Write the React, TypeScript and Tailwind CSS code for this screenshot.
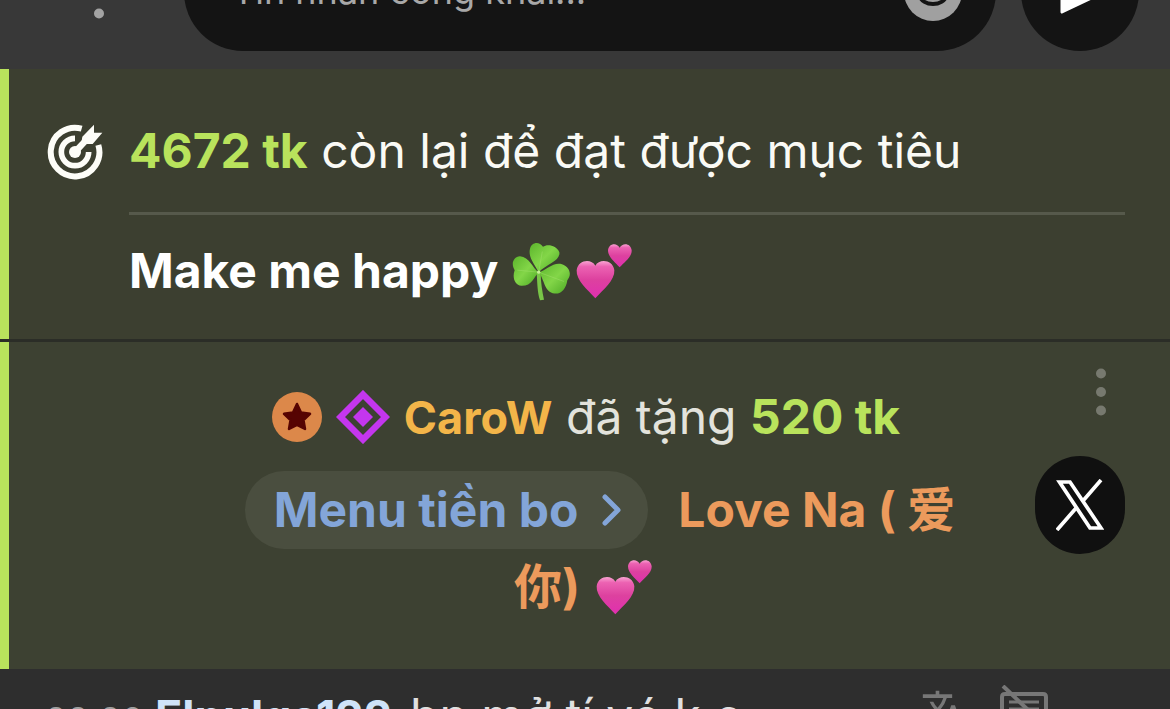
import React from "react";
import { MdTranslate } from "react-icons/md";

const TargetIcon = () => (
  <svg viewBox="0 0 168 168" className="size-14 shrink-0" fill="none" aria-hidden="true">
    <path d="M154 63A73 73 0 1 1 104 14" stroke="#fdfdf8" strokeWidth="18" />
    <path d="M125 84A41 41 0 1 1 84 43" stroke="#fdfdf8" strokeWidth="17" />
    <circle cx="84" cy="84" r="18" fill="#fdfdf8" />
    <path d="M84 84L116 50" stroke="#fdfdf8" strokeWidth="19" />
    <path d="M141 2V26H166L137 60H115L104 50L106 38Z" fill="#fdfdf8" />
  </svg>
);

const CloverIcon = () => (
  <svg viewBox="0 0 174 176" className="h-[59px] w-[58px] shrink-0" role="img" aria-label="clover">
    <defs>
      <linearGradient id="leaf" x1="0" y1="0" x2="1" y2="1">
        <stop offset="0" stopColor="#5cb52c" />
        <stop offset="0.5" stopColor="#83d648" />
        <stop offset="1" stopColor="#4aa823" />
      </linearGradient>
    </defs>
    <path d="M74 90C76 122 76 150 84 174L96 173C91 150 86 120 86 92Z" fill="#79c647" />
    <path d="M80 90C66 64 48 44 54 20C58 0 82 -4 93 14C106 4 134 10 142 30C146 56 104 66 80 90Z" fill="url(#leaf)" />
    <path d="M80 90C62 78 52 44 24 42C4 44 -4 64 8 84C0 106 8 128 28 131C60 132 66 104 80 90Z" fill="url(#leaf)" />
    <path d="M80 90C104 84 124 58 150 66C174 74 180 98 166 114C162 140 148 156 128 154C96 150 98 112 80 90Z" fill="url(#leaf)" />
    <path d="M80 90L91 28M80 90L16 84M80 90L156 118" stroke="#a9e572" strokeWidth="3" opacity="0.4" />
    <circle cx="80" cy="90" r="5" fill="#c5ee96" />
  </svg>
);

const HeartsIcon = ({ id }: { id: string }) => (
  <svg viewBox="0 0 168 168" className="size-14 shrink-0" role="img" aria-label="two hearts">
    <defs>
      <linearGradient id={id} x1="0" y1="0" x2="0" y2="1">
        <stop offset="0" stopColor="#f9a3d2" />
        <stop offset="0.15" stopColor="#ec62b2" />
        <stop offset="0.5" stopColor="#dd419f" />
        <stop offset="1" stopColor="#e02fb0" />
      </linearGradient>
    </defs>
    <path d="M58 68C46 46 6 50 2 82C0 112 34 140 58 166C82 140 117 112 115 82C111 50 70 46 58 68Z" fill={`url(#${id})`} />
    <path d="M131 14C123 -2 98 0 96 22C96 42 116 56 131 73C146 56 168 42 167 22C165 0 139 -2 131 14Z" fill={`url(#${id})`} />
  </svg>
);

const StarBadge = () => (
  <svg viewBox="0 0 50 50" className="size-[50px] shrink-0" role="img" aria-label="star">
    <circle cx="25" cy="25" r="25" fill="#dc884a" />
    <path d="M25 12L29 20.5L38 21.8L31.5 28.2L33 37L25 33L17 37L18.5 28.2L12 21.8L21 20.5Z" fill="#560402" stroke="#560402" strokeWidth="2.5" strokeLinejoin="round" />
  </svg>
);

const DiamondBadge = () => (
  <svg viewBox="0 0 54 54" className="size-[54px] shrink-0" role="img" aria-label="diamond">
    <path d="M27 4.5L49.5 27L27 49.5L4.5 27Z" fill="none" stroke="#c436ee" strokeWidth="6.5" />
    <path d="M27 17L37 27L27 37L17 27Z" fill="#c436ee" />
  </svg>
);

const Dots = ({ className }: { className: string }) => (
  <svg viewBox="0 0 48 48" className={className} fill="currentColor" aria-hidden="true">
    <circle cx="24" cy="5.5" r="5" />
    <circle cx="24" cy="24" r="5" />
    <circle cx="24" cy="42.5" r="5" />
  </svg>
);

const ChatBar = () => (
  <header className="flex h-[69px] shrink-0 items-end overflow-hidden bg-[#383838] pr-[31px] pb-[18px]">
    <div className="flex h-[118px] w-[184px] shrink-0 items-center pt-1.5 pl-[75px]">
      <button type="button" aria-label="Menu">
        <Dots className="size-12 text-[#a3a3a3]" />
      </button>
    </div>
    <div className="flex h-[118px] min-w-0 flex-1 items-center rounded-full bg-[#141414] pr-[34px] pl-12">
      <input
        type="text"
        aria-label="Tin nhắn công khai"
        placeholder="Tin nhắn công khai..."
        className="min-w-0 flex-1 bg-transparent pb-0.5 text-[36px] text-white outline-none placeholder:text-[#a8a8a8]"
      />
      <button type="button" aria-label="Emoji">
        <svg viewBox="0 0 58 58" className="size-[58px]" aria-hidden="true">
          <circle cx="29" cy="29" r="29" fill="#a0a0a0" />
          <circle cx="19" cy="22" r="4" fill="#141414" />
          <circle cx="39" cy="22" r="4" fill="#141414" />
          <path d="M15 32C19 44 39 44 43 32" fill="none" stroke="#141414" strokeWidth="4" />
        </svg>
      </button>
    </div>
    <button
      type="button"
      aria-label="Send"
      className="ml-[25px] flex size-[118px] shrink-0 items-center justify-center rounded-full bg-[#141414]"
    >
      <svg viewBox="0 0 56 48" className="h-12 w-14" aria-hidden="true">
        <path d="M10 3L54 23L10 44V28L38 23L10 18Z" fill="#fff" stroke="#fff" strokeWidth="3" strokeLinejoin="round" />
      </svg>
    </button>
  </header>
);

const GoalMessage = () => (
  <section className="flex shrink-0 items-start gap-[26px] border-l-9 border-[#b9e35c] bg-[#3c3f30] pt-[46px] pr-[45px] pb-8 pl-[38px]">
    <div className="flex h-[74px] items-center">
      <TargetIcon />
    </div>
    <div className="min-w-0 flex-1">
      <p className="border-b-3 border-[#56594b] pb-[25px] leading-[72px] text-[#fafaf5]">
        <strong className="font-bold text-[#b9e35c]">4672 tk</strong> còn lại để đạt được mục tiêu
      </p>
      <p className="mt-5 flex items-center leading-[72px] font-bold text-white">
        <span className="mr-[14px]">Make me happy</span>
        <CloverIcon />
        <span className="ml-1.5 flex">
          <HeartsIcon id="goal-hearts" />
        </span>
      </p>
    </div>
  </section>
);

const TipMessage = () => (
  <section className="mt-[3px] flex shrink-0 border-l-9 border-[#b9e35c] bg-[#3d4132] pr-[45px] pb-11 pl-32">
    <div className="flex min-w-0 flex-1 flex-col items-center pt-[39px]">
      <p className="flex h-[72px] items-center">
        <StarBadge />
        <span className="mr-[14px] ml-3.5 flex">
          <DiamondBadge />
        </span>
        <span className="whitespace-pre text-[#e3e3dc]">
          <strong className="text-[45px] font-bold text-[#f3b549]">CaroW</strong> đã tặng{" "}
          <strong className="font-bold text-[#b9e35c]">520 tk</strong>
        </span>
      </p>
      <div className="mt-[18px] ml-7 flex items-center gap-[30px] font-bold text-[#ec9a5c]">
        <button
          type="button"
          className="flex h-[78px] items-center gap-6 rounded-full bg-[#4a4e3f] pr-[26px] pl-[29px] text-[#83a5d8]"
        >
          Menu tiền bo
          <svg viewBox="0 0 20 32" className="h-8 w-5" fill="none" aria-hidden="true">
            <path d="M3 3L16 16L3 29" stroke="currentColor" strokeWidth="5" strokeLinecap="round" strokeLinejoin="round" />
          </svg>
        </button>
        <span>Love Na ( 爱</span>
      </div>
      <p className="flex h-[76px] items-center gap-4 pr-1.5 font-bold text-[#ec9a5c]">
        你)
        <HeartsIcon id="tip-hearts" />
      </p>
    </div>
    <div className="flex w-[90px] shrink-0 flex-col items-end pt-[26px]">
      <button type="button" aria-label="Message options">
        <Dots className="size-12 text-[#77796f]" />
      </button>
      <a
        href="#share"
        aria-label="Share on X"
        className="mt-10 flex h-[98px] w-[90px] items-center justify-center rounded-full bg-[#101010]"
      >
        <svg viewBox="0 0 48 52" className="h-[52px] w-12" fill="none" stroke="#fff" strokeWidth="3.7" aria-hidden="true">
          <path d="M3.5 3H14L45 49H34Z" />
          <path d="M45 1L26 23M21 28L1 51" />
        </svg>
      </a>
    </div>
  </section>
);

const ChatMessage = () => (
  <section className="flex shrink-0 items-start bg-[#2e2e2e] pt-4 pl-[45px] text-[#e0e0e0]">
    <p className="flex min-w-0 flex-1 items-baseline pt-[3px] leading-[56px]">
      <time className="w-[110px] text-[36px] text-[#a0a0a0]">22:20</time>
      <strong className="mr-[18px] text-[45px] font-bold text-[#cfe3f8]">Elpulga122</strong>
      bn mở tí vó k e
    </p>
    <div className="flex w-[249px] shrink-0 items-start gap-[34px]">
      <button type="button" aria-label="Translate" className="pt-0.5 text-[#777]">
        <MdTranslate className="size-11" />
      </button>
      <button type="button" aria-label="Hide messages">
        <svg viewBox="0 0 50 50" className="size-[50px]" fill="none" stroke="#777" strokeWidth="4" aria-hidden="true">
          <path d="M3 46V12Q3 9 6 9H44Q47 9 47 12V38H12L3 46" />
          <path d="M10 17H40M10 24H40" strokeWidth="3" />
          <path d="M4 1L48 43" />
        </svg>
      </button>
    </div>
  </section>
);

const App = () => {
  return (
    <main className="flex h-screen flex-col overflow-hidden bg-[#2b2d27] font-['Inter','Noto_Sans_CJK_SC',sans-serif] text-[48px]">
      <ChatBar />
      <GoalMessage />
      <TipMessage />
      <ChatMessage />
    </main>
  );
};

export default App;
